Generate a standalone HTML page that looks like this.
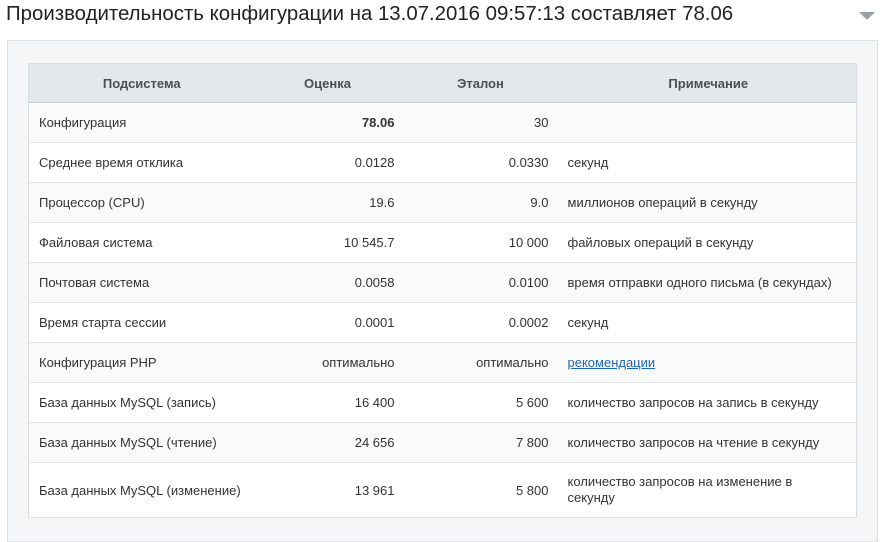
<!DOCTYPE html>
<html><head><meta charset="utf-8"><style>
body{margin:0;width:888px;height:531px;background:#fff;font-family:"Liberation Sans",sans-serif;overflow:hidden;position:relative}
.t{position:absolute;left:6px;top:3px;font-size:20.4px;color:#222;white-space:nowrap}
.arr{position:absolute;left:859px;top:12px;width:0;height:0;border-left:8px solid transparent;border-right:8px solid transparent;border-top:8px solid #9a9fa3}
.panel{position:absolute;left:7px;top:40px;width:869px;height:500px;background:#f4f6f7;border:1px solid #dde2e4}
table{position:absolute;left:20px;top:22px;width:829px;border-collapse:collapse;table-layout:fixed;font-size:13px;color:#333;border:1px solid #d8dde0}
th{height:38px;background:#e3e8ea;color:#4a4f53;font-weight:bold;font-size:13px;border-bottom:1px solid #c8cfd3;padding:0}
td{height:39px;border-bottom:1px solid #dfe3e6;padding:0 8px 0 10px;background:#fff;white-space:nowrap}
td:nth-child(4){padding-left:7px}
tr:nth-child(even) td{background:#f9fafa}
td.n2{text-align:right;padding-right:6px}
td.n3{text-align:right;padding-right:12px}
a{color:#2067b0}
</style></head><body>
<div class="t">Производительность конфигурации на 13.07.2016 09:57:13 составляет 78.06</div>
<div class="arr"></div>
<div class="panel">
<table>
<colgroup><col style="width:226px"><col style="width:146px"><col style="width:160px"><col></colgroup>
<tr><th>Подсистема</th><th>Оценка</th><th>Эталон</th><th>Примечание</th></tr>
<tr><td>Конфигурация</td><td class="n2"><b>78.06</b></td><td class="n3">30</td><td></td></tr>
<tr><td>Среднее время отклика</td><td class="n2">0.0128</td><td class="n3">0.0330</td><td>секунд</td></tr>
<tr><td>Процессор (CPU)</td><td class="n2">19.6</td><td class="n3">9.0</td><td>миллионов операций в секунду</td></tr>
<tr><td>Файловая система</td><td class="n2">10 545.7</td><td class="n3">10 000</td><td>файловых операций в секунду</td></tr>
<tr><td>Почтовая система</td><td class="n2">0.0058</td><td class="n3">0.0100</td><td>время отправки одного письма (в секундах)</td></tr>
<tr><td>Время старта сессии</td><td class="n2">0.0001</td><td class="n3">0.0002</td><td>секунд</td></tr>
<tr><td>Конфигурация PHP</td><td class="n2">оптимально</td><td class="n3">оптимально</td><td><a href="#">рекомендации</a></td></tr>
<tr><td>База данных MySQL (запись)</td><td class="n2">16 400</td><td class="n3">5 600</td><td>количество запросов на запись в секунду</td></tr>
<tr><td>База данных MySQL (чтение)</td><td class="n2">24 656</td><td class="n3">7 800</td><td>количество запросов на чтение в секунду</td></tr>
<tr><td style="height:54px">База данных MySQL (изменение)</td><td class="n2">13 961</td><td class="n3">5 800</td><td style="line-height:16px">количество запросов на изменение в<br>секунду</td></tr>
</table>
</div>
</body></html>
